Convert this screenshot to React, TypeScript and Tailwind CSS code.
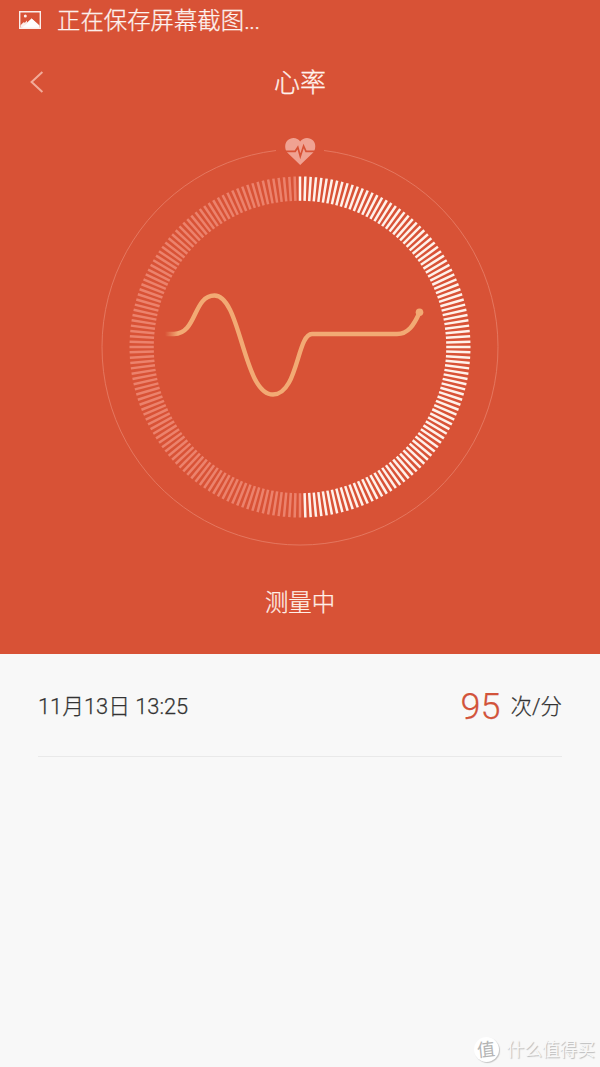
import React from "react"

const TICKS = 200

const StatusBar: React.FC = () => {
  return (
    <div className="flex h-10 items-center pl-[19px] text-white/90">
      <svg width="22" height="18" viewBox="0 0 22 18" className="shrink-0">
        <path d="M0 0h22v18H0z M1.4 1.4v15.2h19.2V1.4z" fill="currentColor" fillRule="evenodd" />
        <path d="M1.6 16.8V14.200L4.500 11.200L5.900 11.700L8 9.600V11.600L4.800 15L12.600 7.400L20.400 14.600V16.800z" fill="currentColor" />
        <path d="M3 16.800L12.600 7.400L20.400 14.600V16.800z" fill="currentColor" />
        <circle cx="6.300" cy="5" r="1.500" fill="currentColor" />
      </svg>
      <span className="ml-4 pt-px whitespace-nowrap text-[23.4px] leading-10 font-light [-webkit-text-stroke:0.25px_currentColor]">
        正在保存屏幕截图<span className="tracking-[-0.4px]">...</span>
      </span>
    </div>
  )
}

const Header: React.FC<{ title: string }> = ({ title }) => {
  return (
    <header className="grid h-[84px] grid-cols-3 items-center">
      <button aria-label="Back" className="pl-[30px]">
        <svg width="14" height="22" viewBox="0 0 14 22" fill="none">
          <path d="M12.400 1 L1.600 11 L12.400 21" stroke="#f2ab99" strokeWidth="2" />
        </svg>
      </button>
      <h1 className="pt-[2px] text-center text-[26px] font-light text-[#fff3ee] [-webkit-text-stroke:0.3px_currentColor]">{title}</h1>
    </header>
  )
}

const Dial: React.FC = () => {
  return (
    <svg width="400" height="424" viewBox="100 124 400 424" className="mx-auto block" fill="none">
      <defs>
        <linearGradient id="fade" gradientUnits="userSpaceOnUse" x1="165" y1="0" x2="178" y2="0">
          <stop offset="0" stopColor="#f2aa74" stopOpacity="0" />
          <stop offset="1" stopColor="#f2aa74" />
        </linearGradient>
      </defs>

      {/* outer ring, open at the top for the heart */}
      <path d="M324 150.500A198 198 0 1 1 276 150.500" stroke="#e57a63" strokeWidth="0.900" />

      {Array.from({ length: TICKS }, (_, i) => (
        <line
          key={i}
          x1="300"
          x2="300"
          y1="176.500"
          y2="200.800"
          stroke={i < TICKS / 2 ? "#fff1ea" : "#ec826c"}
          strokeWidth="2.500"
          transform={`rotate(${(i * 360) / TICKS} 300 347)`}
        />
      ))}

      <path
        d="M300.200 165L287.500 152.800C284.500 149.500 284.400 143.500 287.400 140.500C291 136.800 297.500 137.200 300.200 141.500C303 137.200 309.500 136.800 313.100 140.500C316.100 143.500 316 149.500 313 152.800Z"
        fill="#f0a292"
      />
      <path d="M285 151.300H295.200L297.800 147.300L300.300 156.300L303.600 146L306 151.300H316" stroke="#d85236" strokeWidth="1.700" />

      {/* pulse */}
      <path
        d="M165 334H174C197 334 193 295.500 214.500 295.500C241 295.500 243 394.500 273 394.500C298 394.500 297 334 312 334H397C408 334 414 325 419.500 312.500"
        stroke="url(#fade)"
        strokeWidth="4.400"
      />
      <circle cx="419.500" cy="312.300" r="3.800" fill="#f2aa74" />
    </svg>
  )
}

const Watermark: React.FC = () => {
  return (
    <div className="flex items-center justify-end gap-2 pr-[5px] pb-1 text-[#f8f8f8] [text-shadow:1px_1px_1px_#bbb]">
      <span className="flex size-[25px] items-center justify-center rounded-full bg-white text-[18px] leading-none text-[#b4b4b4] shadow-[1px_1px_1px_#c4c4c4] [text-shadow:none]">
        <span className="-rotate-6">值</span>
      </span>
      <span className="pt-px text-[17.700px] leading-[26px]">什么值得买</span>
    </div>
  )
}

export default function App() {
  return (
    <main className="flex h-[1067px] w-[600px] flex-col overflow-hidden bg-[#f8f8f8] font-['Roboto','Noto_Sans_CJK_SC',sans-serif]">
      <section className="h-[654px] shrink-0 bg-[#d85236]">
        <StatusBar />
        <Header title="心率" />
        <Dial />
        <p className="mt-[37px] text-center text-[23.400px] leading-9 font-light text-[#fff0e9] [-webkit-text-stroke:0.25px_currentColor]">测量中</p>
      </section>
      <section className="mx-[38px] flex h-[103px] shrink-0 items-center justify-between border-b border-[#e9e9e9] pt-[4px] text-[21.800px] font-light text-[#333] [-webkit-text-stroke:0.25px_currentColor]">
        <span>11月13日 13:25</span>
        <div className="flex items-center">
          <span className="text-[36px] leading-none text-[#d2533a]">95</span>
          <span className="ml-[10px] text-[21.500px]">次/分</span>
        </div>
      </section>
      <footer className="mt-auto">
        <Watermark />
      </footer>
    </main>
  )
}
